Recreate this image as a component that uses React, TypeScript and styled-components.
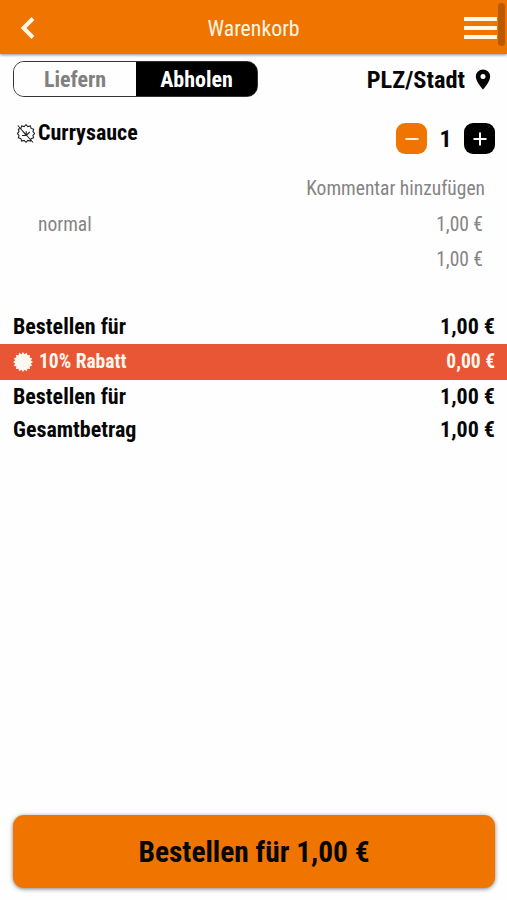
import React from "react";
import styled, { createGlobalStyle } from "styled-components";

const Global = createGlobalStyle`
  * { box-sizing: border-box; }
  body { margin: 0; background: #fefefe; overflow: hidden; }
  button { font: inherit; border: 0; padding: 0; margin: 0; background: none; cursor: pointer; color: inherit; }
  svg { display: block; flex: none; }
`;

const Screen = styled.main`
  position: relative;
  width: 507px;
  height: 900px;
  display: flex;
  flex-direction: column;
  font-family: "Roboto Condensed", Roboto, sans-serif;
  font-stretch: 75%;
  color: #060606;
  white-space: nowrap;
`;

const Text = styled.span<{ $size: number; $weight?: number; $color?: string }>`
  font-size: ${(p) => p.$size}px;
  font-weight: ${(p) => p.$weight ?? 700};
  color: ${(p) => p.$color ?? "inherit"};
`;

const Header = styled.header`
  height: 54px;
  flex: none;
  display: grid;
  grid-template-columns: 60px 1fr 60px;
  align-items: center;
  background: #ef7500;
  box-shadow: 0 1px 3px rgba(0, 0, 0, 0.45);
  text-align: center;
  padding-top: 2px;
`;

const BackButton = styled.button`
  padding-left: 20px;
`;

const MenuButton = styled.button`
  display: flex;
  flex-direction: column;
  gap: 5px;
  padding-left: 17px;
`;

const MenuBar = styled.i`
  width: 33px;
  height: 4px;
  background: #fff8e8;
`;

const ScrollThumb = styled.div`
  position: absolute;
  top: 3px;
  right: 2px;
  width: 7px;
  height: 43px;
  border-radius: 3.5px;
  background: rgba(125, 60, 0, 0.48);
`;

const Delivery = styled.section`
  display: flex;
  justify-content: space-between;
  align-items: center;
  height: 36px;
  margin: 7px 16px 0 13px;
`;

const Toggle = styled.div`
  display: flex;
  width: 245px;
  height: 36px;
  border: 1px solid #333;
  border-radius: 11px;
  background: linear-gradient(90deg, #fefefe 50%, #000 50%);
  overflow: hidden;
`;

const ToggleOption = styled.button<{ $active?: boolean }>`
  width: ${(p) => (p.$active ? "auto" : "122px")};
  flex: ${(p) => (p.$active ? 1 : "none")};
  background: ${(p) => (p.$active ? "#000" : "#fefefe")};
  color: ${(p) => (p.$active ? "#fff" : "#808080")};
`;

const Place = styled.button`
  display: flex;
  align-items: center;
  gap: 10px;
  padding-top: 1px;
`;

const Item = styled.section`
  display: flex;
  justify-content: space-between;
  height: 74px;
  padding: 26px 12px 0 17px;
`;

const ItemName = styled.div`
  display: flex;
  align-items: center;
  gap: 3px;
  height: 19px;
`;

const Quantity = styled.div`
  display: grid;
  grid-template-columns: 31px 37px 31px;
  align-items: center;
  text-align: center;
  height: 31px;
`;

const StepButton = styled.button<{ $color: string }>`
  display: grid;
  place-items: center;
  width: 31px;
  height: 31px;
  border-radius: 9px;
  background: ${(p) => p.$color};
`;

const Details = styled.section`
  color: #848484;
  padding: 0 24px 0 38px;
`;

const DetailRow = styled.div<{ $end?: boolean; $shift?: number }>`
  display: flex;
  justify-content: ${(p) => (p.$end ? "flex-end" : "space-between")};
  align-items: center;
  height: 35.5px;
  margin-right: ${(p) => p.$shift ?? 0}px;
`;

const Totals = styled.section`
  padding-top: 32px;
`;

const TotalRow = styled.div<{ $height: number }>`
  display: flex;
  align-items: center;
  justify-content: space-between;
  height: ${(p) => p.$height}px;
  padding: 0 12px 0 13px;
`;

const Discount = styled(TotalRow)`
  background: #e95635;
  color: #fff8f0;
`;

const DiscountName = styled.div`
  display: flex;
  align-items: center;
  gap: 6px;
`;

const OrderButton = styled.button`
  height: 73px;
  margin: auto 12px 12px 13px;
  border-radius: 11px;
  background: #ef7500;
  box-shadow: 0 1px 4px rgba(0, 0, 0, 0.5);
`;

const scallop = (c: number, outer: number, inner: number, teeth: number) =>
  Array.from({ length: teeth * 2 }, (_, i) => {
    const r = i % 2 ? inner : outer;
    const a = (i * Math.PI) / teeth - Math.PI / 2;
    return `${(c + r * Math.cos(a)).toFixed(2)},${(c + r * Math.sin(a)).toFixed(2)}`;
  }).join(" ");

export default function App() {
  return (
    <Screen>
      <Global />
      <Header>
        <BackButton aria-label="Zurück">
          <svg width="16" height="24" viewBox="0 0 16 24" fill="none" stroke="#fff8e8" strokeWidth="4">
            <path d="M13 2.500 3.500 12l9.500 9.500" />
          </svg>
        </BackButton>
        <Text $size={21.8} $weight={400} $color="#fff5e6">Warenkorb</Text>
        <MenuButton aria-label="Menü">
          <MenuBar /><MenuBar /><MenuBar />
        </MenuButton>
      </Header>
      <ScrollThumb />

      <Delivery>
        <Toggle>
          <ToggleOption><Text $size={22}>Liefern</Text></ToggleOption>
          <ToggleOption $active><Text $size={22}>Abholen</Text></ToggleOption>
        </Toggle>
        <Place>
          <Text $size={24.4}>PLZ/Stadt</Text>
          <svg width="16" height="21" viewBox="0 0 16 21">
            <path fill="#060606" fillRule="evenodd" d="M8 .4a7.200 7.200 0 0 0-7.200 7.200C.8 13 8 20.600 8 20.600S15.200 13 15.200 7.600A7.200 7.200 0 0 0 8 .4Zm0 4.700a2.500 2.500 0 1 1 0 5a2.500 2.500 0 0 1 0-5Z" />
          </svg>
        </Place>
      </Delivery>

      <Item>
        <ItemName>
          <svg width="18" height="20" viewBox="0 0 18 20" fill="none" stroke="#222" strokeWidth="1.100">
            <polygon points={scallop(9, 8.8, 7.2, 12)} transform="translate(0 1.500)" />
            <path d="M.8 2.500 16 19.500M5.500 8l3.700 4.500M9.200 12.500l3.500-3.500M9.200 12.500V8.200M5 12.500h4" />
          </svg>
          <Text $size={22}>Currysauce</Text>
        </ItemName>
        <Quantity>
          <StepButton $color="#ef7500" aria-label="Weniger">
            <svg width="14" height="14" stroke="#fff0dc" strokeWidth="2"><path d="M.5 7h13" /></svg>
          </StepButton>
          <Text $size={24}>1</Text>
          <StepButton $color="#000" aria-label="Mehr">
            <svg width="14" height="14" stroke="#fff" strokeWidth="2"><path d="M.5 7h13M7 .5v13" /></svg>
          </StepButton>
        </Quantity>
      </Item>

      <Details>
        <DetailRow $end $shift={-2}><Text $size={19.5} $weight={400}>Kommentar hinzufügen</Text></DetailRow>
        <DetailRow>
          <Text $size={19.5} $weight={400}>normal</Text>
          <Text $size={19.5} $weight={400}>1,00 €</Text>
        </DetailRow>
        <DetailRow $end><Text $size={19.5} $weight={400}>1,00 €</Text></DetailRow>
      </Details>

      <Totals>
        <TotalRow $height={34}><Text $size={22}>Bestellen für</Text><Text $size={22}>1,00 €</Text></TotalRow>
        <Discount $height={36}>
          <DiscountName>
            <svg width="20" height="20"><polygon fill="#fff8f0" points={scallop(10, 10, 8, 16)} /></svg>
            <Text $size={19.5}>10% Rabatt</Text>
          </DiscountName>
          <Text $size={19.5}>0,00 €</Text>
        </Discount>
        <TotalRow $height={33}><Text $size={22}>Bestellen für</Text><Text $size={22}>1,00 €</Text></TotalRow>
        <TotalRow $height={33}><Text $size={22}>Gesamtbetrag</Text><Text $size={22}>1,00 €</Text></TotalRow>
      </Totals>

      <OrderButton><Text $size={29.4}>Bestellen für 1,00 €</Text></OrderButton>
    </Screen>
  );
}
